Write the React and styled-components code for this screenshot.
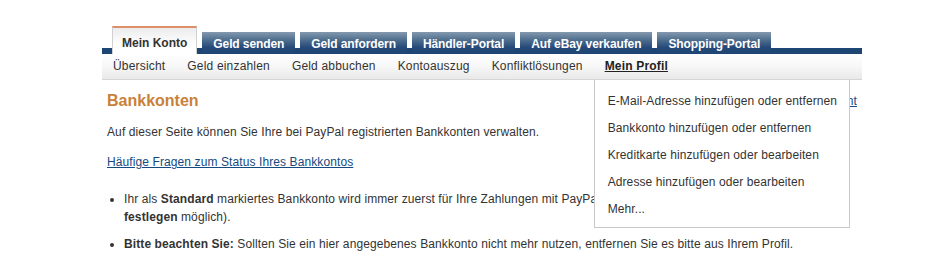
import React from 'react';
import styled, { createGlobalStyle } from 'styled-components';

const GlobalStyle = createGlobalStyle`
  body {
    margin: 0;
    background: #fff;
    font-family: "Liberation Sans", Arial, sans-serif;
    font-size: 12px;
    color: #333;
  }
`

const Page = styled.div`
  width: 760px;
  padding: 27px 0 0 102px;
`

const TabBar = styled.ul`
  display: flex;
  align-items: flex-end;
  gap: 5px;
  height: 21px;
  margin: 0;
  padding: 0 0 0 10px;
  list-style: none;
  border-bottom: 6px solid #1d4674;
`

const Tab = styled.li`
  box-sizing: border-box;
  margin-bottom: -6px;
  font-weight: bold;
  font-size: 12px;
  line-height: 14px;
  white-space: nowrap;
  cursor: pointer;
  ${({ $active }) => $active ? `
    height: 28px;
    padding: 8px 9px 0;
    color: #333;
    background: linear-gradient(#ececec, #fdfdfd 60%, #fff);
    border-top: 2px solid #dd8f68;
    border-left: 1px solid #d0d0d0;
    border-right: 1px solid #d0d0d0;
    position: relative;
    z-index: 1;
  ` : `
    height: 22px;
    padding: 5px 11px 0;
    letter-spacing: -0.1px;
    color: #fff;
    background: linear-gradient(#8499ae, #50708f 35%, #26497a 70%, #1d4674);
  `}
`

const SubNav = styled.ul`
  display: flex;
  height: 25px;
  margin: 0;
  padding: 0;
  list-style: none;
  background: linear-gradient(#fff, #f7f7f7 50%, #e9e9e9);
  border-bottom: 1px solid #d6d6d6;
`

const SubItem = styled.li`
  position: relative;
  padding: 0 11px;
  line-height: 25px;
  letter-spacing: 0.18px;
  white-space: nowrap;
  color: ${({ $active }) => ($active ? '#222' : '#333')};
  font-weight: ${({ $active }) => ($active ? 'bold' : 'normal')};
  text-decoration: ${({ $active }) => ($active ? 'underline' : 'none')};
`

const Dropdown = styled.ul`
  position: absolute;
  top: 26px;
  left: 0;
  z-index: 5;
  box-sizing: border-box;
  width: 256px;
  height: 148px;
  margin: 0;
  padding: 8px 0 0;
  list-style: none;
  background: #fff;
  border: 1px solid #c9c9c9;
  border-top: none;
  font-weight: normal;
  text-decoration: none;
  letter-spacing: 0.1px;
`

const DropItem = styled.li`
  padding: 0 13px;
  line-height: 27px;
  color: #333;
`

const Content = styled.div`
  padding: 0 5px;
  letter-spacing: 0.1px;
`

const HeadRow = styled.div`
  display: flex;
  justify-content: space-between;
  align-items: center;
  margin-top: 11px;
  height: 20px;
`

const Heading = styled.h2`
  margin: 0;
  font-size: 16px;
  line-height: 20px;
  letter-spacing: 0;
  color: #c98138;
`

const Link = styled.a`
  color: #154a80;
  text-decoration: underline;
  line-height: 18px;
`

const Para = styled.p`
  margin: 12px 0 0;
  line-height: 18px;
`

const Bullets = styled.ul`
  margin: 19px 0 0;
  padding-left: 17px;
`

const Bullet = styled.li`
  line-height: 18px;
  & + & {
    margin-top: 9px;
  }
`

const tabs = ['Mein Konto', 'Geld senden', 'Geld anfordern', 'Händler-Portal', 'Auf eBay verkaufen', 'Shopping-Portal'];
const subs = ['Übersicht', 'Geld einzahlen', 'Geld abbuchen', 'Kontoauszug', 'Konfliktlösungen', 'Mein Profil'];
const profileLinks = [
  'E-Mail-Adresse hinzufügen oder entfernen',
  'Bankkonto hinzufügen oder entfernen',
  'Kreditkarte hinzufügen oder bearbeiten',
  'Adresse hinzufügen oder bearbeiten',
  'Mehr...',
];

const App = () => {
  return (
    <Page>
      <GlobalStyle />
      <TabBar>
        {tabs.map((t, i) => (
          <Tab key={t} $active={i === 0}>{t}</Tab>
        ))}
      </TabBar>
      <SubNav>
        {subs.map((s) => (
          <SubItem key={s} $active={s === 'Mein Profil'}>
            {s}
            {s === 'Mein Profil' &&
              <Dropdown>
                {profileLinks.map((l) => <DropItem key={l}>{l}</DropItem>)}
              </Dropdown>
            }
          </SubItem>
        ))}
      </SubNav>
      <Content>
        <HeadRow>
          <Heading>Bankkonten</Heading>
          <Link href="#">Zum Zahlungsinstrument</Link>
        </HeadRow>
        <Para>Auf dieser Seite können Sie Ihre bei PayPal registrierten Bankkonten verwalten.</Para>
        <Para><Link href="#">Häufige Fragen zum Status Ihres Bankkontos</Link></Para>
        <Bullets>
          <Bullet>
            Ihr als <b>Standard</b> markiertes Bankkonto wird immer zuerst für Ihre Zahlungen mit PayPal verwendet (Änderung nur mit <b>Als Standard festlegen</b> möglich).
          </Bullet>
          <Bullet>
            <b>Bitte beachten Sie:</b> Sollten Sie ein hier angegebenes Bankkonto nicht mehr nutzen, entfernen Sie es bitte aus Ihrem Profil.
          </Bullet>
        </Bullets>
      </Content>
    </Page>
  )
}

export default App;
